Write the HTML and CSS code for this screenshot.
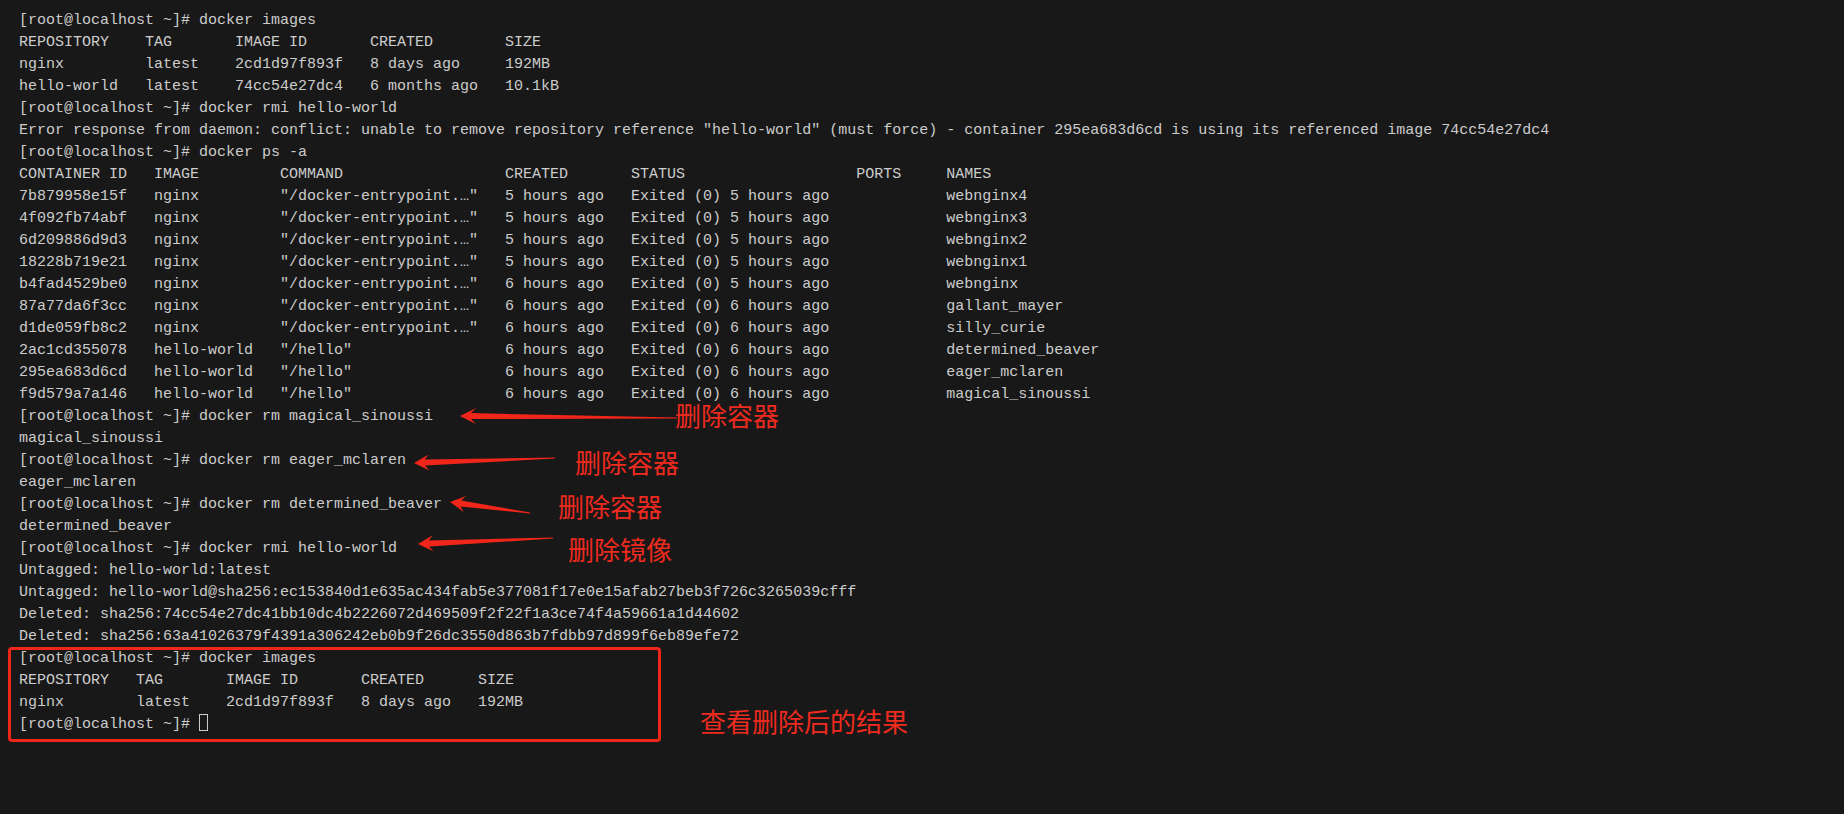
FILE: index.html
```html
<!DOCTYPE html>
<html lang="zh-CN">
<head>
    <meta charset="UTF-8">
    <title>docker rm / rmi</title>
    <link rel="stylesheet" href="styles.css">
</head>
<body>
<div class="screen">
<pre class="term">[root@localhost ~]# docker images
REPOSITORY    TAG       IMAGE ID       CREATED        SIZE
nginx         latest    2cd1d97f893f   8 days ago     192MB
hello-world   latest    74cc54e27dc4   6 months ago   10.1kB
[root@localhost ~]# docker rmi hello-world
Error response from daemon: conflict: unable to remove repository reference "hello-world" (must force) - container 295ea683d6cd is using its referenced image 74cc54e27dc4
[root@localhost ~]# docker ps -a
CONTAINER ID   IMAGE         COMMAND                  CREATED       STATUS                   PORTS     NAMES
7b879958e15f   nginx         "/docker-entrypoint.…"   5 hours ago   Exited (0) 5 hours ago             webnginx4
4f092fb74abf   nginx         "/docker-entrypoint.…"   5 hours ago   Exited (0) 5 hours ago             webnginx3
6d209886d9d3   nginx         "/docker-entrypoint.…"   5 hours ago   Exited (0) 5 hours ago             webnginx2
18228b719e21   nginx         "/docker-entrypoint.…"   5 hours ago   Exited (0) 5 hours ago             webnginx1
b4fad4529be0   nginx         "/docker-entrypoint.…"   6 hours ago   Exited (0) 5 hours ago             webnginx
87a77da6f3cc   nginx         "/docker-entrypoint.…"   6 hours ago   Exited (0) 6 hours ago             gallant_mayer
d1de059fb8c2   nginx         "/docker-entrypoint.…"   6 hours ago   Exited (0) 6 hours ago             silly_curie
2ac1cd355078   hello-world   "/hello"                 6 hours ago   Exited (0) 6 hours ago             determined_beaver
295ea683d6cd   hello-world   "/hello"                 6 hours ago   Exited (0) 6 hours ago             eager_mclaren
f9d579a7a146   hello-world   "/hello"                 6 hours ago   Exited (0) 6 hours ago             magical_sinoussi
[root@localhost ~]# docker rm magical_sinoussi
magical_sinoussi
[root@localhost ~]# docker rm eager_mclaren
eager_mclaren
[root@localhost ~]# docker rm determined_beaver
determined_beaver
[root@localhost ~]# docker rmi hello-world
Untagged: hello-world:latest
Untagged: hello-world@sha256:ec153840d1e635ac434fab5e377081f17e0e15afab27beb3f726c3265039cfff
Deleted: sha256:74cc54e27dc41bb10dc4b2226072d469509f2f22f1a3ce74f4a59661a1d44602
Deleted: sha256:63a41026379f4391a306242eb0b9f26dc3550d863b7fdbb97d899f6eb89efe72
[root@localhost ~]# docker images
REPOSITORY   TAG       IMAGE ID       CREATED      SIZE
nginx        latest    2cd1d97f893f   8 days ago   192MB
[root@localhost ~]# <span class="cursor"></span></pre>

    <!-- annotations drawn over the terminal -->
    <svg class="arrows" width="1844" height="814" viewBox="0 0 1844 814">
        <polygon points="460,416 476.1,408.1 471,413.1 677,417.5 677,418.5 471,419.1 475.9,424.1"/>
        <polygon points="414,463 428.7,454.5 424.9,459.6 555,457.5 555,458.5 425.1,465.6 429.3,470.5"/>
        <polygon points="450,502 466,496.1 461.3,500.5 530.1,512.5 529.9,513.5 460.5,506.5 463.8,512"/>
        <polygon points="418,544 432.6,535.3 428.9,540.5 553,537.5 553,538.5 429.1,546.5 433.4,551.3"/>
    </svg>

    <span class="note note-1">删除容器</span>
    <span class="note note-2">删除容器</span>
    <span class="note note-3">删除容器</span>
    <span class="note note-4">删除镜像</span>
    <span class="note note-5">查看删除后的结果</span>

    <div class="highlight"></div>
</div>
</body>
</html>
```

FILE: styles.css
```css
body {
    margin: 0;
    background-color: #181818;
}

.screen {
    position: relative;
    width: 1844px;
    height: 814px;
    overflow: hidden;
    background-color: #181818;
}

.term {
    margin: 0;
    padding: 10px 0 0 19px;
    font-family: "Liberation Mono", "DejaVu Sans Mono", monospace;
    font-size: 15px;
    line-height: 22px;
    color: #cccccc;
}

.cursor {
    display: inline-block;
    box-sizing: border-box;
    width: 9px;
    height: 17px;
    border: 1px solid #cccccc;
    vertical-align: top;
}

/* red markup */
.arrows {
    position: absolute;
    top: 0;
    left: 0;
}

.arrows polygon {
    fill: #f0261b;
}

.note {
    position: absolute;
    font-family: "Noto Sans CJK SC", sans-serif;
    font-size: 26px;
    line-height: 26px;
    color: #ef2a1f;
    white-space: nowrap;
}

.note-1 { left: 675px; top: 402px; }
.note-2 { left: 575px; top: 449px; }
.note-3 { left: 558px; top: 493px; }
.note-4 { left: 568px; top: 536px; }
.note-5 { left: 700px; top: 708px; }

.highlight {
    position: absolute;
    left: 8px;
    top: 647px;
    width: 653px;
    height: 95px;
    box-sizing: border-box;
    border: 3px solid #f0261b;
    border-radius: 4px;
}
```
